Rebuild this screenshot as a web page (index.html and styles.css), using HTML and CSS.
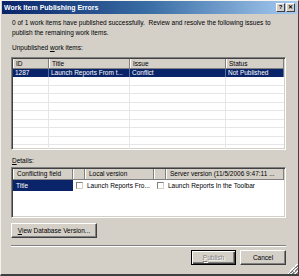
FILE: index.html
```html
<!DOCTYPE html>
<html>
<head>
<meta charset="utf-8">
<link rel="stylesheet" href="styles.css">
</head>
<body>
<div class="window">
  <div class="titlebar">
    <span class="title">Work Item Publishing Errors</span>
    <div class="tb-buttons">
      <span class="tbtn">?</span>
      <span class="tbtn">&#x2715;</span>
    </div>
  </div>
  <div class="content">
    <p class="msg">0 of 1 work items have published successfully.&nbsp; Review and resolve the following issues to publish the remaining work items.</p>
    <div class="label">Unpublished <u>w</u>ork items:</div>
    <div class="listview items">
      <div class="row head">
        <div class="cell">ID</div><div class="cell">Title</div><div class="cell">Issue</div><div class="cell">Status</div>
      </div>
      <div class="row sel">
        <div class="cell">1287</div><div class="cell">Launch Reports From t...</div><div class="cell">Conflict</div><div class="cell">Not Published</div>
      </div>
      <div class="row"><div class="cell"></div><div class="cell"></div><div class="cell"></div><div class="cell"></div></div>
      <div class="row"><div class="cell"></div><div class="cell"></div><div class="cell"></div><div class="cell"></div></div>
      <div class="row"><div class="cell"></div><div class="cell"></div><div class="cell"></div><div class="cell"></div></div>
      <div class="row"><div class="cell"></div><div class="cell"></div><div class="cell"></div><div class="cell"></div></div>
      <div class="row"><div class="cell"></div><div class="cell"></div><div class="cell"></div><div class="cell"></div></div>
      <div class="row"><div class="cell"></div><div class="cell"></div><div class="cell"></div><div class="cell"></div></div>
      <div class="row"><div class="cell"></div><div class="cell"></div><div class="cell"></div><div class="cell"></div></div>
      <div class="row"><div class="cell"></div><div class="cell"></div><div class="cell"></div><div class="cell"></div></div>
      <div class="row"><div class="cell"></div><div class="cell"></div><div class="cell"></div><div class="cell"></div></div>
    </div>
    <div class="label details-label"><u>D</u>etails:</div>
    <div class="listview detail-list">
      <div class="drow dhead">
        <div class="cell">Conflicting field</div><div class="cell"></div><div class="cell">Local version</div><div class="cell"></div><div class="cell">Server version (11/5/2006 9:47:11 ...</div>
      </div>
      <div class="drow ddata">
        <div class="cell selcell">Title</div>
        <div class="cell chk"><span class="box"></span></div>
        <div class="cell">Launch Reports Fro...</div>
        <div class="cell chk"><span class="box"></span></div>
        <div class="cell">Launch Reports In the Toolbar</div>
      </div>
    </div>
    <div class="viewdb-row">
      <button class="btn viewdb"><u>V</u>iew Database Version...</button>
    </div>
    <div class="sep"></div>
    <div class="footer">
      <button class="btn publish" disabled><u>P</u>ublish</button>
      <button class="btn cancel">Cancel</button>
    </div>
  </div>
  <div class="grip"></div>
</div>
</body>
</html>
```
FILE: styles.css
```css
html, body {
  margin: 0;
  padding: 0;
  background: #d4d0c8;
}
body {
  width: 299px;
  height: 276px;
  overflow: hidden;
  font-family: "Liberation Sans", Arial, sans-serif;
  font-size: 6.5px;
  color: #000;
}
.window {
  position: relative;
  box-sizing: border-box;
  width: 299px;
  height: 276px;
  border-top: 1px solid #f4f3ee;
  border-left: 1px solid #f4f3ee;
  border-right: 1px solid #404040;
  border-bottom: 2px solid #404040;
  background: #d4d0c8;
  padding: 0 1px;
  display: flex;
  flex-direction: column;
}
.titlebar {
  flex: 0 0 13px;
  display: flex;
  align-items: center;
  justify-content: space-between;
  background: linear-gradient(to right, #0a246a 0%, #3a6ea5 50%, #a6caf0 100%);
  padding: 0 2px 0 2px;
}
.title {
  color: #fff;
  font-weight: bold;
  font-size: 7px;
}
.tb-buttons {
  display: flex;
  gap: 1px;
}
.tbtn {
  box-sizing: border-box;
  width: 9px;
  height: 9px;
  background: #d4d0c8;
  border-top: 1px solid #fff;
  border-left: 1px solid #fff;
  border-right: 1px solid #404040;
  border-bottom: 1px solid #404040;
  font-size: 6px;
  font-weight: bold;
  line-height: 7px;
  text-align: center;
  color: #000;
}
.content {
  flex: 1 1 auto;
  display: flex;
  flex-direction: column;
  padding: 4px 11px 0 9px;
}
.msg {
  flex: 0 0 auto;
  margin: 0 0 0 1px;
  line-height: 10px;
}
.label {
  flex: 0 0 10px;
  margin: 5px 0 0 1px;
  line-height: 10px;
}
.listview {
  box-sizing: border-box;
  width: 275px;
  background: #fff;
  border-top: 1px solid #808080;
  border-left: 1px solid #808080;
  border-right: 1px solid #fff;
  border-bottom: 1px solid #fff;
  box-shadow: inset 1px 1px 0 #404040, inset -1px -1px 0 #d4d0c8;
  padding: 1px;
  overflow: hidden;
}
.items {
  flex: 0 0 93px;
  margin-top: 4px;
}
.row {
  display: grid;
  grid-template-columns: 36px 81px 96px 1fr;
  height: 8.45px;
  box-sizing: border-box;
  border-bottom: 1px solid #e6e6e6;
}
.row .cell {
  border-right: 1px solid #e6e6e6;
  padding-left: 2px;
  line-height: 8px;
  white-space: nowrap;
  overflow: hidden;
}
.row .cell:last-child {
  border-right: none;
}
.row.head {
  background: #d4d0c8;
  height: 10px;
  border-bottom: 1px solid #808080;
}
.row.head .cell {
  border-left: 1px solid #fff;
  border-right: 1px solid #808080;
  line-height: 9px;
}
.row.sel {
  background: #0a246a;
  color: #fff;
  border-bottom: none;
}
.row.sel .cell {
  border-right: 1px solid #5a6f9a;
}
.details-label {
  margin-top: 6px;
}
.detail-list {
  flex: 0 0 51px;
  margin-top: 1px;
}
.drow {
  display: grid;
  grid-template-columns: 60px 12px 69px 12px 1fr;
  box-sizing: border-box;
  height: 11px;
}
.drow .cell {
  white-space: nowrap;
  overflow: hidden;
}
.dhead {
  background: #d4d0c8;
  border-bottom: 1px solid #808080;
}
.dhead .cell {
  border-left: 1px solid #fff;
  border-right: 1px solid #808080;
  line-height: 10px;
  padding-left: 3px;
}
.ddata .cell {
  line-height: 11px;
  padding-left: 2px;
}
.ddata .selcell {
  background: #0a246a;
  color: #fff;
  padding-left: 3px;
}
.ddata .chk {
  display: flex;
  align-items: center;
  justify-content: center;
  padding-left: 0;
}
.box {
  box-sizing: border-box;
  width: 7px;
  height: 7px;
  background: #fff;
  border-top: 1px solid #808080;
  border-left: 1px solid #808080;
  border-right: 1px solid #d4d0c8;
  border-bottom: 1px solid #d4d0c8;
}
.btn {
  box-sizing: border-box;
  font-family: "Liberation Sans", Arial, sans-serif;
  font-size: 6.5px;
  background: #d4d0c8;
  color: #000;
  border-top: 1px solid #fff;
  border-left: 1px solid #fff;
  border-right: 1px solid #404040;
  border-bottom: 1px solid #404040;
  box-shadow: inset -1px -1px 0 #808080;
  padding: 0;
  margin: 0;
  height: 15px;
  line-height: 12px;
  white-space: nowrap;
}
.viewdb-row {
  flex: 0 0 15px;
  display: flex;
  margin-top: 5px;
}
.viewdb {
  width: 86px;
}
.sep {
  flex: 0 0 auto;
  margin-top: 7px;
  height: 0;
  width: 275px;
  border-top: 1px solid #808080;
  border-bottom: 1px solid #fff;
}
.footer {
  flex: 0 0 15px;
  display: flex;
  justify-content: flex-end;
  gap: 4px;
  margin-top: 3px;
}
.publish {
  width: 45px;
  color: #808080;
  text-shadow: 1px 1px 0 #fff;
  border: 1px solid #000;
  box-shadow: inset 1px 1px 0 #fff, inset -1px -1px 0 #404040, inset -2px -2px 0 #808080;
}
.cancel {
  width: 46px;
}
.grip {
  position: absolute;
  right: 0;
  bottom: 0;
  width: 10px;
  height: 10px;
  background: linear-gradient(135deg,
    transparent 0 45%, #fff 45% 52%, #808080 52% 60%, transparent 60% 65%,
    #fff 65% 70%, #808080 70% 78%, transparent 78% 83%,
    #fff 83% 88%, #808080 88% 96%, transparent 96%);
}
```
